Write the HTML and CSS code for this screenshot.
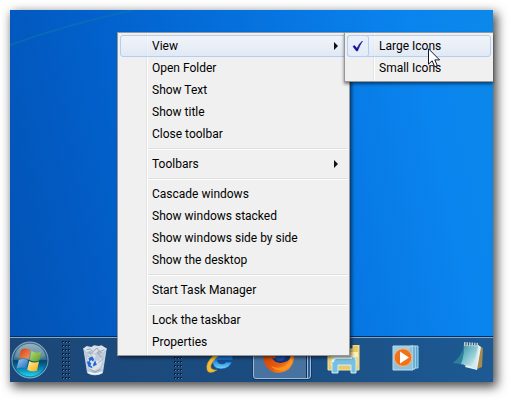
FILE: index.html
```html
<!DOCTYPE html>
<html lang="en">
<head>
<meta charset="utf-8">
<title>Taskbar menu</title>
<link rel="stylesheet" href="styles.css">
</head>
<body>
<main class="desktop">
  <svg class="streak" viewBox="0 0 483 326" preserveAspectRatio="none" aria-hidden="true">
    <path d="M0 35Q58 14 124 0" fill="none" stroke="#1482a4" stroke-opacity=".35" stroke-width="2"/>
  </svg>

  <footer class="taskbar">
    <button class="start" aria-label="Start">
      <svg width="38" height="38" viewBox="0 0 38 38">
        <defs>
          <linearGradient id="orb" x2="0" y2="1"><stop stop-color="#8fa9b9"/><stop offset=".48" stop-color="#3d7390"/><stop offset=".52" stop-color="#06426b"/><stop offset=".75" stop-color="#0786b5"/><stop offset="1" stop-color="#2fe6fb"/></linearGradient>
          <linearGradient id="red" x2="1" y2="1"><stop stop-color="#d33a12"/><stop offset="1" stop-color="#f79a5c"/></linearGradient>
          <linearGradient id="green" x2="1" y2="1"><stop stop-color="#c5df75"/><stop offset="1" stop-color="#4c9c26"/></linearGradient>
          <linearGradient id="blue" x2="1" y2="1"><stop stop-color="#9ccdf3"/><stop offset="1" stop-color="#1667b8"/></linearGradient>
          <linearGradient id="yellow" x2="1" y2="1"><stop stop-color="#fff3a0"/><stop offset="1" stop-color="#f5a90f"/></linearGradient>
        </defs>
        <circle cx="19" cy="19" r="18" fill="url(#orb)" stroke="#7fa9c4"/>
        <circle cx="19" cy="19" r="16.8" fill="none" stroke="#0d456e" stroke-opacity=".6"/>
        <path d="M4 16Q7 3 19 3T34 15Q27 20 19 19T4 16Z" fill="#fff" fill-opacity=".14"/>
        <path d="M10 9q5-3 9.500.3l-2 9q-4.500-2.800-9.500-.5z" fill="url(#red)"/>
        <path d="M20.500 10q4.500 3 10 .5l-2.200 9q-5 2.200-9.800-.6z" fill="url(#green)"/>
        <path d="M7.700 19q5-2.300 9.500.4l-2 8.600q-4-2.800-9.500-.4z" fill="url(#blue)"/>
        <path d="M18.200 20q4.500 2.800 9.800.6l-2 8.800q-5 2.200-9.800-.7z" fill="url(#yellow)"/>
      </svg>
    </button>
    <span class="grip"></span>
    <button class="task bin" aria-label="Recycle Bin">
      <svg width="26" height="32" viewBox="0 0 28 34">
        <path d="M2 5L26 5 22 31Q14 35 6 31Z" fill="#a8b7c8" stroke="#c5d1dd"/>
        <path d="M4 8l5 3 4-3 5 3 6-3-3 20q-7 4-14 0z" fill="#bfcbd7"/>
        <path d="M1 5l4-3 5 1 3-2 5 1 3-1 6 4-4 4-5-2-4 3-5-3-4 2z" fill="#d9e1e8"/>
        <path d="M6 10l4 3 2-3 3 2-2 5 5 1 3-4 1 5-3 6-5 3-5-1-3-7z" fill="#dbe3ea"/>
        <path d="M5 6l4-1 3 3 4-4 3 4 5-2M6 12l5 4M17 10l5 5M9 27l5 3 6-3M18 20l4-4" stroke="#8e9fb3" fill="none"/>
        <path d="M7 15l4-2 2 3-1 3-2-2-2 2zM14 17l2 5-4 2v-3l1-1zM5 19l3-1 2 3-1 2 2 1v2l-4-2z" fill="#2467d4"/>
        <path d="M7 30q7 4 14 0" stroke="#f0f4f7" stroke-width="2" fill="none"/>
        <path d="M3 8l4 23M25 8l-4 23" stroke="#f0f5fa" stroke-opacity=".5" fill="none"/>
      </svg>
    </button>
    <span class="grip second"></span>
    <button class="task" aria-label="Internet Explorer">
      <svg width="32" height="34" viewBox="0 0 32 34">
        <defs><linearGradient id="ie" x2="0" y2="1"><stop stop-color="#1c85e6"/><stop offset=".5" stop-color="#1672d2"/><stop offset="1" stop-color="#73d8ff"/></linearGradient></defs>
        <path d="M29 17H13q1 4 5 4 3 0 4-2h6q-3 7-11 7-9 0-9-10Q8 6 18 6q11 0 11 11ZM22 13q-1-3-4-3-4 0-5 3Z" fill="url(#ie)" stroke="#0c4fa4" stroke-width=".7"/>
        <path d="M13 27Q5 32 3 27 1 20 10 12 20 3 28 4q4 2 1 8-1-5-7-3-9 3-14 11-4 7 5 7Z" fill="#f4bd35" stroke="#c58e19" stroke-width=".5"/>
      </svg>
    </button>
    <button class="task active" aria-label="Firefox">
      <svg width="32" height="32" viewBox="0 0 32 32">
        <defs><linearGradient id="fox" x2="1" y2="1"><stop stop-color="#b9350c"/><stop offset=".6" stop-color="#ea5b10"/><stop offset="1" stop-color="#ffb52c"/></linearGradient></defs>
        <circle cx="16" cy="13" r="13" fill="#12357e"/>
        <path d="M8 1Q-4 12 3 22q9 12 23 3 9-10 2-22 1 14-6 15-9 3-13-4 4 1 6-1-5-1-6-5 3-1 5-4-5 0-6-3z" fill="url(#fox)"/>
        <path d="M29 8q3 14-8 18-8 2-13-4 9 4 15-1 5-4 6-13Z" fill="#ff9a20" fill-opacity=".8"/>
        <path d="M12 12q4-2 6 1 3-2 5 0-2 4-6 4-4 0-5-5Z" fill="#1c4fa4"/>
      </svg>
    </button>
    <button class="task" aria-label="Windows Explorer">
      <svg width="34" height="30" viewBox="0 0 34 30">
        <path d="M3 4l8-2 2 2h13V0h6v25H1V8h2z" fill="#e9ca68" stroke="#f6e6a0"/>
        <path d="M4 7h27v5H4z" fill="#fff1b4"/>
        <path d="M3 12h28v9H3z" fill="#f1d67d"/>
        <path d="M5 16q0-4 3-4h18q3 0 3 4v12h-5v-8H11v8H5z" fill="#78bfe2" stroke="#c8f0fc"/>
        <path d="M6 17q0-4 4-4h15" stroke="#e9fbff" stroke-width="2" fill="none"/>
      </svg>
    </button>
    <button class="task player" aria-label="Windows Media Player">
      <svg width="28" height="26" viewBox="0 0 28 26">
        <path d="M23 1h3v22h-3z" fill="#55a5d0" stroke="#a9d6ed"/>
        <path d="M19 1h4v23h-4z" fill="#287dae" stroke="#b8e4f5"/>
        <path d="M1 1h20v24H1z" fill="#91c2dc" stroke="#b9dff0"/>
        <path d="M2 2h18L2 16z" fill="#fff" fill-opacity=".18"/>
        <circle cx="11" cy="12.500" r="8.800" fill="#f17319" stroke="#fbb780"/>
        <path d="M8 6.500l9 6-9 6z" fill="#fff"/>
      </svg>
    </button>
    <button class="task notes" aria-label="Notepad">
      <svg width="32" height="32" viewBox="0 0 32 32">
        <defs><linearGradient id="pad" x2="1" y2="1"><stop stop-color="#348ca2"/><stop offset=".5" stop-color="#83c5d0"/><stop offset="1" stop-color="#e2f5f6"/></linearGradient></defs>
        <path d="M27 5l4 2-1 19-5 2z" fill="#a88a4a"/>
        <path d="M26 4l3 2-4 23-12-3z" fill="#e8f1f2"/>
        <path d="M12 4h15l-3 24-12-4z" fill="#d3e9ec"/>
        <path d="M12 4h14q-1 11-6 21L8 23Q12 15 12 4Z" fill="url(#pad)"/>
        <path d="M12 4Q10 15 1 22l8 1q3-7 3-19z" fill="#2a8199"/>
        <path d="M12 3l15 1" stroke="#c2ccd0" stroke-width="4" stroke-dasharray="1.500 1"/>
      </svg>
    </button>
  </footer>

  <ul class="menu context" role="menu">
    <li><button class="item hot" role="menuitem">View<span class="arrow"></span></button></li>
    <li><button class="item" role="menuitem">Open Folder</button></li>
    <li><button class="item" role="menuitem">Show Text</button></li>
    <li><button class="item" role="menuitem">Show title</button></li>
    <li><button class="item" role="menuitem">Close toolbar</button></li>
    <li class="rule" role="separator"></li>
    <li><button class="item" role="menuitem">Toolbars<span class="arrow"></span></button></li>
    <li class="rule" role="separator"></li>
    <li><button class="item" role="menuitem">Cascade windows</button></li>
    <li><button class="item" role="menuitem">Show windows stacked</button></li>
    <li><button class="item" role="menuitem">Show windows side by side</button></li>
    <li><button class="item" role="menuitem">Show the desktop</button></li>
    <li class="rule" role="separator"></li>
    <li><button class="item" role="menuitem">Start Task Manager</button></li>
    <li class="rule" role="separator"></li>
    <li><button class="item" role="menuitem">Lock the taskbar</button></li>
    <li><button class="item" role="menuitem">Properties</button></li>
  </ul>

  <ul class="menu submenu" role="menu">
    <li>
      <button class="item hot" role="menuitemradio" aria-checked="true">
        <span class="check"><svg width="12" height="12" viewBox="0 0 12 12"><path d="M1 6.500L2.500 5.500 5 8.500Q7 3.500 10.500 1 7.500 5.500 5.500 11H4.500Z" fill="#10109c" stroke="#10109c" stroke-width=".6"/></svg></span>Large Icons</button>
    </li>
    <li><button class="item" role="menuitemradio" aria-checked="false">Small Icons</button></li>
  </ul>

  <svg class="pointer" width="13" height="20" viewBox="0 0 13 20" aria-hidden="true">
    <path d="M.5 .8V16.200L4.200 12.800 6.700 18.800 9.300 17.600 6.800 11.900H11.600Z" fill="#fff" stroke="#16162a"/>
  </svg>
</main>
</body>
</html>
```
FILE: styles.css
```css
* {
  box-sizing: border-box;
}

body {
  margin: 0;
  min-height: 100vh;
  padding: 10px 18px 18px 10px;
  display: flex;
  background: #fff;
  font: 12px/20px Roboto, "Open Sans", sans-serif;
  color: #000;
}

button {
  margin: 0;
  padding: 0;
  border: 0;
  background: none;
  font: inherit;
  color: inherit;
}

svg {
  display: block;
}

.desktop {
  position: relative;
  flex: 1;
  min-width: 0;
  display: flex;
  flex-direction: column;
  justify-content: flex-end;
  clip-path: inset(-10px -18px -18px -10px);
  background: linear-gradient(78deg, #0352b3 0%, #0260cb 28%, #0674e0 60%, #0a84ee 85%, #0c88ea 100%);
  box-shadow: 3px 4px 10px 1px rgba(0, 0, 0, .7);
}

.streak {
  flex: 1;
  width: 100%;
  min-height: 0;
}

.taskbar {
  height: 46px;
  flex: none;
  display: flex;
  align-items: center;
  border-top: 1px solid #0a2c54;
  box-shadow: inset 0 1px #7aa9d2;
  background: linear-gradient(90deg, #1c4778, #1b4c80 50%, #1d5a93);
}

.start {
  width: 40px;
  flex: none;
  display: flex;
  justify-content: center;
}

.grip {
  width: 9px;
  height: 38px;
  flex: none;
  margin-left: 11px;
  background:
    conic-gradient(from 90deg at 2px 1px, transparent 270deg, #5f83a7 270deg) 0 1px / 3px 4px,
    conic-gradient(from 90deg at 1px 2px, transparent 270deg, #0a1f3a 270deg) 0 0 / 3px 4px;
}

.task {
  width: 62px;
  height: 44px;
  flex: none;
  display: flex;
  justify-content: center;
  align-items: center;
}

.bin {
  width: 50px;
}

.grip.second {
  margin: 0 7px 0 53px;
}

.active {
  width: 58px;
  height: 38px;
  margin: 0 2px;
  padding-right: 6px;
  border: 1px solid #9dbbd8;
  border-radius: 3px;
  background: linear-gradient(90deg, #48729f 52px, #0f3258 52px, #0f3258 53px, #9dbbd8 53px, #9dbbd8 54px, #2f5f91 54px);
  box-shadow: 0 0 0 1px #123a66;
}

.player {
  padding-bottom: 4px;
}

.notes {
  padding-bottom: 6px;
}

.menu {
  position: absolute;
  top: 22px;
  margin: 0;
  padding: 2px;
  list-style: none;
  border: 1px solid #979797;
  background: linear-gradient(90deg, transparent 28px, #e2e3e3 28px, #e2e3e3 29px, #fff 29px, #fff 30px, transparent 30px) #f0f0f0;
  background-clip: padding-box;
  box-shadow: 2px 2px 3px rgba(0, 0, 0, .5);
}

.context {
  left: 107px;
  width: 233px;
}

.submenu {
  left: 334px;
  right: 0;
  border-right: 0;
  box-shadow: 0 2px 3px rgba(0, 0, 0, .5);
}

.item {
  position: relative;
  display: flex;
  align-items: center;
  width: 100%;
  height: 22px;
  padding: 0 12px 0 31px;
  border: 1px solid transparent;
  border-radius: 3px;
  text-align: left;
  white-space: nowrap;
}

.hot {
  border-color: #aecff7;
  background: linear-gradient(rgba(242, 246, 252, .7), rgba(219, 230, 246, .7));
}

.arrow {
  margin-left: auto;
  border: 4px solid transparent;
  border-left-color: #111;
  border-right: 0;
}

.context .item {
  padding-right: 8px;
}

.rule {
  height: 8px;
  margin-left: 28px;
  padding-top: 3px;
}

.rule::before {
  content: "";
  display: block;
  height: 2px;
  background: linear-gradient(#e0e0e0 1px, #fff 1px);
}

.check {
  position: absolute;
  inset: -1px auto -1px -1px;
  width: 22px;
  display: flex;
  align-items: center;
  justify-content: center;
  border: 1px solid #aecff7;
  border-radius: 3px;
  background: rgba(230, 239, 252, .6);
}

.pointer {
  position: absolute;
  left: 418px;
  top: 38px;
}
```
